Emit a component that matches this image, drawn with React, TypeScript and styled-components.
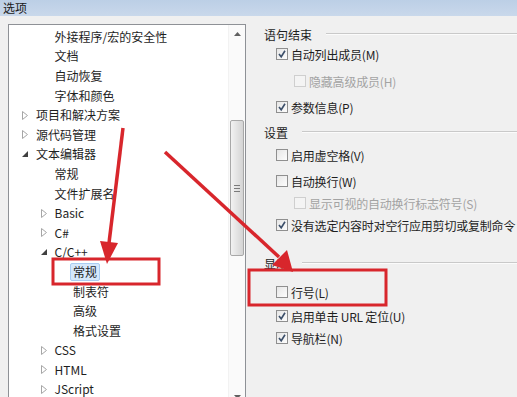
import styled, { createGlobalStyle } from 'styled-components';

const GlobalStyle = createGlobalStyle`
  html, body {
    margin: 0;
    padding: 0;
    background: #f0f0f0;
  }
  body {
    font-family: "Noto Sans CJK SC", "Noto Sans", "Liberation Sans", sans-serif;
    font-size: 12px;
    color: #1e1e1e;
  }
`;

interface TreeNode {
  label: string;
  level: number;
  toggle?: 'open' | 'closed';
  selected?: boolean;
}

const treeNodes: TreeNode[] = [
  { label: '外接程序/宏的安全性', level: 1 },
  { label: '文档', level: 1 },
  { label: '自动恢复', level: 1 },
  { label: '字体和颜色', level: 1 },
  { label: '项目和解决方案', level: 0, toggle: 'closed' },
  { label: '源代码管理', level: 0, toggle: 'closed' },
  { label: '文本编辑器', level: 0, toggle: 'open' },
  { label: '常规', level: 1 },
  { label: '文件扩展名', level: 1 },
  { label: 'Basic', level: 1, toggle: 'closed' },
  { label: 'C#', level: 1, toggle: 'closed' },
  { label: 'C/C++', level: 1, toggle: 'open' },
  { label: '常规', level: 2, selected: true },
  { label: '制表符', level: 2 },
  { label: '高级', level: 2 },
  { label: '格式设置', level: 2 },
  { label: 'CSS', level: 1, toggle: 'closed' },
  { label: 'HTML', level: 1, toggle: 'closed' },
  { label: 'JScript', level: 1, toggle: 'closed' },
];

type Item =
  | { kind: 'header'; label: string; top: number }
  | { kind: 'check'; label: string; top: number; checked?: boolean; disabled?: boolean; indent?: boolean };

const options: Item[] = [
  { kind: 'header', label: '语句结束', top: 2 },
  { kind: 'check', label: '自动列出成员(M)', top: 4, checked: true },
  { kind: 'check', label: '隐藏高级成员(H)', top: 11, disabled: true, indent: true },
  { kind: 'check', label: '参数信息(P)', top: 10, checked: true },
  { kind: 'header', label: '设置', top: 9 },
  { kind: 'check', label: '启用虚空格(V)', top: 7 },
  { kind: 'check', label: '自动换行(W)', top: 10 },
  { kind: 'check', label: '显示可视的自动换行标志符号(S)', top: 6, disabled: true, indent: true },
  { kind: 'check', label: '没有选定内容时对空行应用剪切或复制命令', top: 6, checked: true },
  { kind: 'header', label: '显示', top: 22 },
  { kind: 'check', label: '行号(L)', top: 13 },
  { kind: 'check', label: '启用单击 URL 定位(U)', top: 8, checked: true },
  { kind: 'check', label: '导航栏(N)', top: 6, checked: true },
];

const Toggle = ({ state }: { state?: 'open' | 'closed' }) => (
  <ToggleBox>
    {state === 'closed' && (
      <svg width="6" height="9" viewBox="0 0 6 9">
        <path d="M0.5 0.5 L5.5 4.5 L0.5 8.5 Z" fill="#fff" stroke="#a6a6a6" />
      </svg>
    )}
    {state === 'open' && (
      <svg width="6" height="6" viewBox="0 0 6 6">
        <path d="M6 0 L6 6 L0 6 Z" fill="#404040" />
      </svg>
    )}
  </ToggleBox>
);

const CheckBox = ({ checked, disabled }: { checked?: boolean; disabled?: boolean }) => (
  <Box $disabled={disabled}>
    {checked && (
      <svg width="10" height="10" viewBox="0 0 10 10">
        <path d="M2 5 L4.2 7.8 L8 1.8" fill="none" stroke="#3c4f6a" strokeWidth="1.6" />
      </svg>
    )}
  </Box>
);

const App = () => {
  return (
    <Window>
      <GlobalStyle />
      <TitleBar>选项</TitleBar>
      <Main>
        <TreePanel>
          <TreeList>
            {treeNodes.map((n, i) => (
              <TreeRow key={i} $level={n.level}>
                <Toggle state={n.toggle} />
                <TreeLabel $selected={n.selected}>{n.label}</TreeLabel>
              </TreeRow>
            ))}
          </TreeList>
          <ScrollBar>
            <ArrowBtn>
              <svg width="7" height="4" viewBox="0 0 7 4"><path d="M0 4 L3.5 0 L7 4 Z" fill="#606060" /></svg>
            </ArrowBtn>
            <Track>
              <Thumb>
                <Grip />
                <Grip />
                <Grip />
              </Thumb>
            </Track>
            <ArrowBtn>
              <svg width="7" height="4" viewBox="0 0 7 4"><path d="M0 0 L3.5 4 L7 0 Z" fill="#606060" /></svg>
            </ArrowBtn>
          </ScrollBar>
        </TreePanel>
        <OptionsPanel>
          {options.map((o, i) =>
            o.kind === 'header' ? (
              <Header key={i} $top={o.top}>
                <span>{o.label}</span>
                <Rule />
              </Header>
            ) : (
              <CheckRow key={i} $top={o.top} $indent={o.indent} $disabled={o.disabled}>
                <CheckBox checked={o.checked} disabled={o.disabled} />
                <RowText>{o.label}</RowText>
              </CheckRow>
            )
          )}
        </OptionsPanel>
      </Main>
      <Annotations width="517" height="397" viewBox="0 0 517 397">
        <g stroke="#d8262c" fill="none" strokeWidth="3">
          <rect x="53" y="259" width="106" height="25" />
          <rect x="249" y="270" width="137" height="35" />
          <line x1="123" y1="128" x2="109" y2="243" strokeWidth="3.5" />
          <line x1="165" y1="152" x2="279" y2="257" strokeWidth="3.5" />
        </g>
        <g fill="#d8262c">
          <path d="M100 241 L118 243 L107 264 Z" />
          <path d="M272 265 L287 250 L293 272 Z" />
        </g>
      </Annotations>
    </Window>
  );
};

const Window = styled.div`
  position: relative;
  width: 517px;
  height: 397px;
  overflow: hidden;
  background: #f0f0f0;
`;

const TitleBar = styled.div`
  height: 16px;
  line-height: 15px;
  padding-left: 3px;
  font-size: 12px;
  color: #1a1a1a;
  background: linear-gradient(#bccfe6, #c9d8eb);
`;

const Main = styled.div`
  display: flex;
  padding-top: 8px;
`;

const TreePanel = styled.div`
  display: flex;
  margin-left: 8px;
  width: 236px;
  height: 380px;
  flex-shrink: 0;
  background: #fff;
  border: 1px solid #8e9196;
`;

const TreeList = styled.div`
  flex: 1;
  padding-top: 2px;
`;

const TreeRow = styled.div<{ $level: number }>`
  display: flex;
  align-items: center;
  height: 19.6px;
  padding-left: ${(p) => 10 + p.$level * 18.5}px;
  white-space: nowrap;
`;

const ToggleBox = styled.div`
  display: flex;
  align-items: center;
  width: 16px;
  padding-left: 3px;
  box-sizing: border-box;
`;

const TreeLabel = styled.span<{ $selected?: boolean }>`
  padding: 0 2px;
  margin-left: -2px;
  line-height: 16px;
  color: #1e1e1e;
  background: ${(p) => (p.$selected ? '#d5e8fb' : 'transparent')};
  border: 1px solid ${(p) => (p.$selected ? '#a9cdf2' : 'transparent')};
  border-radius: 2px;
`;

const ScrollBar = styled.div`
  display: flex;
  flex-direction: column;
  width: 16px;
  background: #fafafa;
  border-left: 1px solid #f2f2f2;
`;

const ArrowBtn = styled.div`
  display: flex;
  align-items: center;
  justify-content: center;
  height: 17px;
`;

const Track = styled.div`
  flex: 1;
  padding-top: 78px;
`;

const Thumb = styled.div`
  display: flex;
  flex-direction: column;
  align-items: center;
  justify-content: center;
  gap: 2px;
  width: 14px;
  height: 136px;
  margin: 0 auto;
  box-sizing: border-box;
  border: 1px solid #a8a8a8;
  border-radius: 2px;
  background: linear-gradient(90deg, #f2f2f2, #e0e0e0 60%, #d4d4d4);
`;

const Grip = styled.div`
  width: 6px;
  height: 1px;
  background: #7a7a7a;
`;

const OptionsPanel = styled.div`
  flex: 1;
  min-width: 0;
  padding-left: 18px;
  display: flex;
  flex-direction: column;
  white-space: nowrap;
`;

const Header = styled.div<{ $top: number }>`
  display: flex;
  align-items: center;
  gap: 14px;
  height: 16px;
  margin-top: ${(p) => p.$top}px;
  color: #1e1e1e;
`;

const Rule = styled.div`
  flex: 1;
  height: 1px;
  background: #c9c9c9;
  border-bottom: 1px solid #fbfbfb;
`;

const CheckRow = styled.div<{ $top: number; $indent?: boolean; $disabled?: boolean }>`
  display: flex;
  align-items: center;
  gap: 3px;
  height: 16px;
  margin-top: ${(p) => p.$top}px;
  padding-left: ${(p) => (p.$indent ? 30 : 12)}px;
  color: ${(p) => (p.$disabled ? '#a3a3a3' : '#1e1e1e')};
`;

const RowText = styled.span`
  letter-spacing: -0.2px;
`;

const Box = styled.div<{ $disabled?: boolean }>`
  display: flex;
  align-items: center;
  justify-content: center;
  flex-shrink: 0;
  width: 12px;
  height: 12px;
  box-sizing: border-box;
  border: 1px solid ${(p) => (p.$disabled ? '#cfcfcf' : '#8f8f8f')};
  background: ${(p) => (p.$disabled ? '#f4f4f4' : 'linear-gradient(135deg, #e6e6e6, #fdfdfd)')};
`;

const Annotations = styled.svg`
  position: absolute;
  left: 0;
  top: 0;
  pointer-events: none;
`;

export default App;
